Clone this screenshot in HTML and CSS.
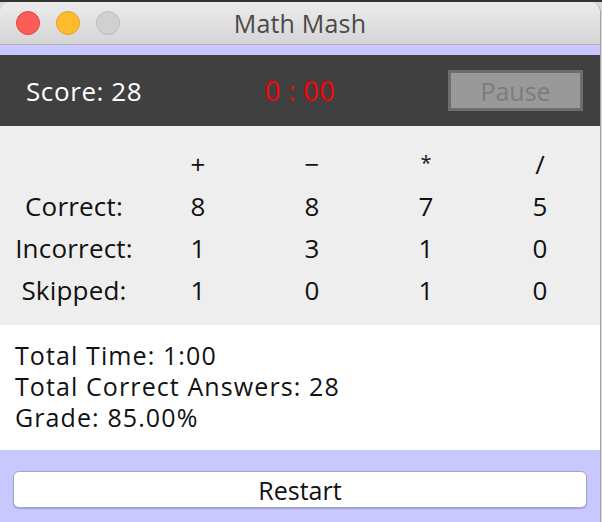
FILE: index.html
```html
<!DOCTYPE html>
<html>
<head>
<meta charset="utf-8">
<link rel="stylesheet" href="styles.css">
</head>
<body>
<div class="window">
  <div class="titlebar">
    <div class="lights">
      <span class="light red"></span>
      <span class="light yellow"></span>
      <span class="light gray"></span>
    </div>
    <div class="title">Math Mash</div>
    <div></div>
  </div>
  <div class="strip"></div>
  <div class="topbar">
    <div class="score">Score: 28</div>
    <div class="timer">0 : 00</div>
    <div class="pause">Pause</div>
  </div>
  <div class="stats">
    <div></div><div>+</div><div>−</div><div class="star">*</div><div>/</div>
    <div>Correct:</div><div>8</div><div>8</div><div>7</div><div>5</div>
    <div>Incorrect:</div><div>1</div><div>3</div><div>1</div><div>0</div>
    <div>Skipped:</div><div>1</div><div>0</div><div>1</div><div>0</div>
  </div>
  <div class="summary">
    <div>Total Time: 1:00</div>
    <div>Total Correct Answers: 28</div>
    <div>Grade: 85.00%</div>
  </div>
  <div class="footer">
    <div class="restart">Restart</div>
  </div>
</div>
</body>
</html>
```
FILE: styles.css
```css
html, body {
  margin: 0;
  padding: 0;
}
body {
  width: 602px;
  height: 522px;
  overflow: hidden;
  background: linear-gradient(#333333 0 2px, #d9d9d9 2px);
  font-family: "Open Sans", "DejaVu Sans", sans-serif;
  color: #111;
}
.window {
  margin-top: 2px;
  width: 600px;
  height: 520px;
  border-right: 1px solid #a0a0a0;
  border-radius: 10px 10px 0 0;
  overflow: hidden;
  display: flex;
  flex-direction: column;
}
.titlebar {
  height: 42px;
  flex: none;
  background: linear-gradient(#ececec, #d5d5d5);
  border-bottom: 1px solid #b4b4b4;
  display: grid;
  grid-template-columns: 1fr auto 1fr;
  align-items: center;
}
.lights {
  display: flex;
  gap: 16px;
  padding-left: 16px;
}
.light {
  width: 22px;
  height: 22px;
  border-radius: 50%;
  border: 1px solid transparent;
}
.red { background: #fd5d57; border-color: #e1443f; }
.yellow { background: #febb2e; border-color: #dfa126; }
.gray { background: #d0d0d0; border-color: #bcbcbc; }
.title {
  font-size: 25px;
  color: #4a4a4a;
  letter-spacing: 0.2px;
}
.strip {
  height: 10px;
  flex: none;
  background: #c8c8ff;
}
.topbar {
  height: 71px;
  flex: none;
  background: #404040;
  display: grid;
  grid-template-columns: 1fr auto 1fr;
  align-items: center;
}
.score {
  color: #fff;
  font-size: 26px;
  letter-spacing: 0.6px;
  padding-left: 26px;
}
.timer {
  color: #ff0000;
  font-size: 27px;
  letter-spacing: 0.5px;
}
.pause {
  justify-self: end;
  margin-right: 17px;
  width: 129px;
  height: 35px;
  border: 3px solid #6d6d6d;
  background: #999999;
  color: #7c7c7c;
  font-size: 25px;
  display: flex;
  align-items: center;
  justify-content: center;
}
.stats {
  height: 199px;
  flex: none;
  box-sizing: border-box;
  padding-top: 17px;
  background: #eeeeee;
  display: grid;
  grid-template-columns: 148px 100px 128px 100px 128px;
  grid-auto-rows: 42px;
  align-items: center;
  justify-items: center;
  font-size: 26px;
  letter-spacing: 0.2px;
}
.star {
  font-size: 20px;
  align-self: start;
  padding-top: 6px;
}
.summary {
  height: 125px;
  flex: none;
  box-sizing: border-box;
  background: #ffffff;
  padding: 15px 15px 0;
  font-size: 25px;
  letter-spacing: 1.1px;
  line-height: 31px;
}
.footer {
  flex: 1;
  background: #c8c8ff;
  padding: 21px 13px 0;
}
.restart {
  height: 35px;
  background: #fff;
  border: 1px solid #a6a6c6;
  border-radius: 6px;
  box-shadow: 0 1px 1px rgba(80, 80, 140, 0.35);
  display: flex;
  align-items: center;
  justify-content: center;
  font-size: 25px;
}
```
